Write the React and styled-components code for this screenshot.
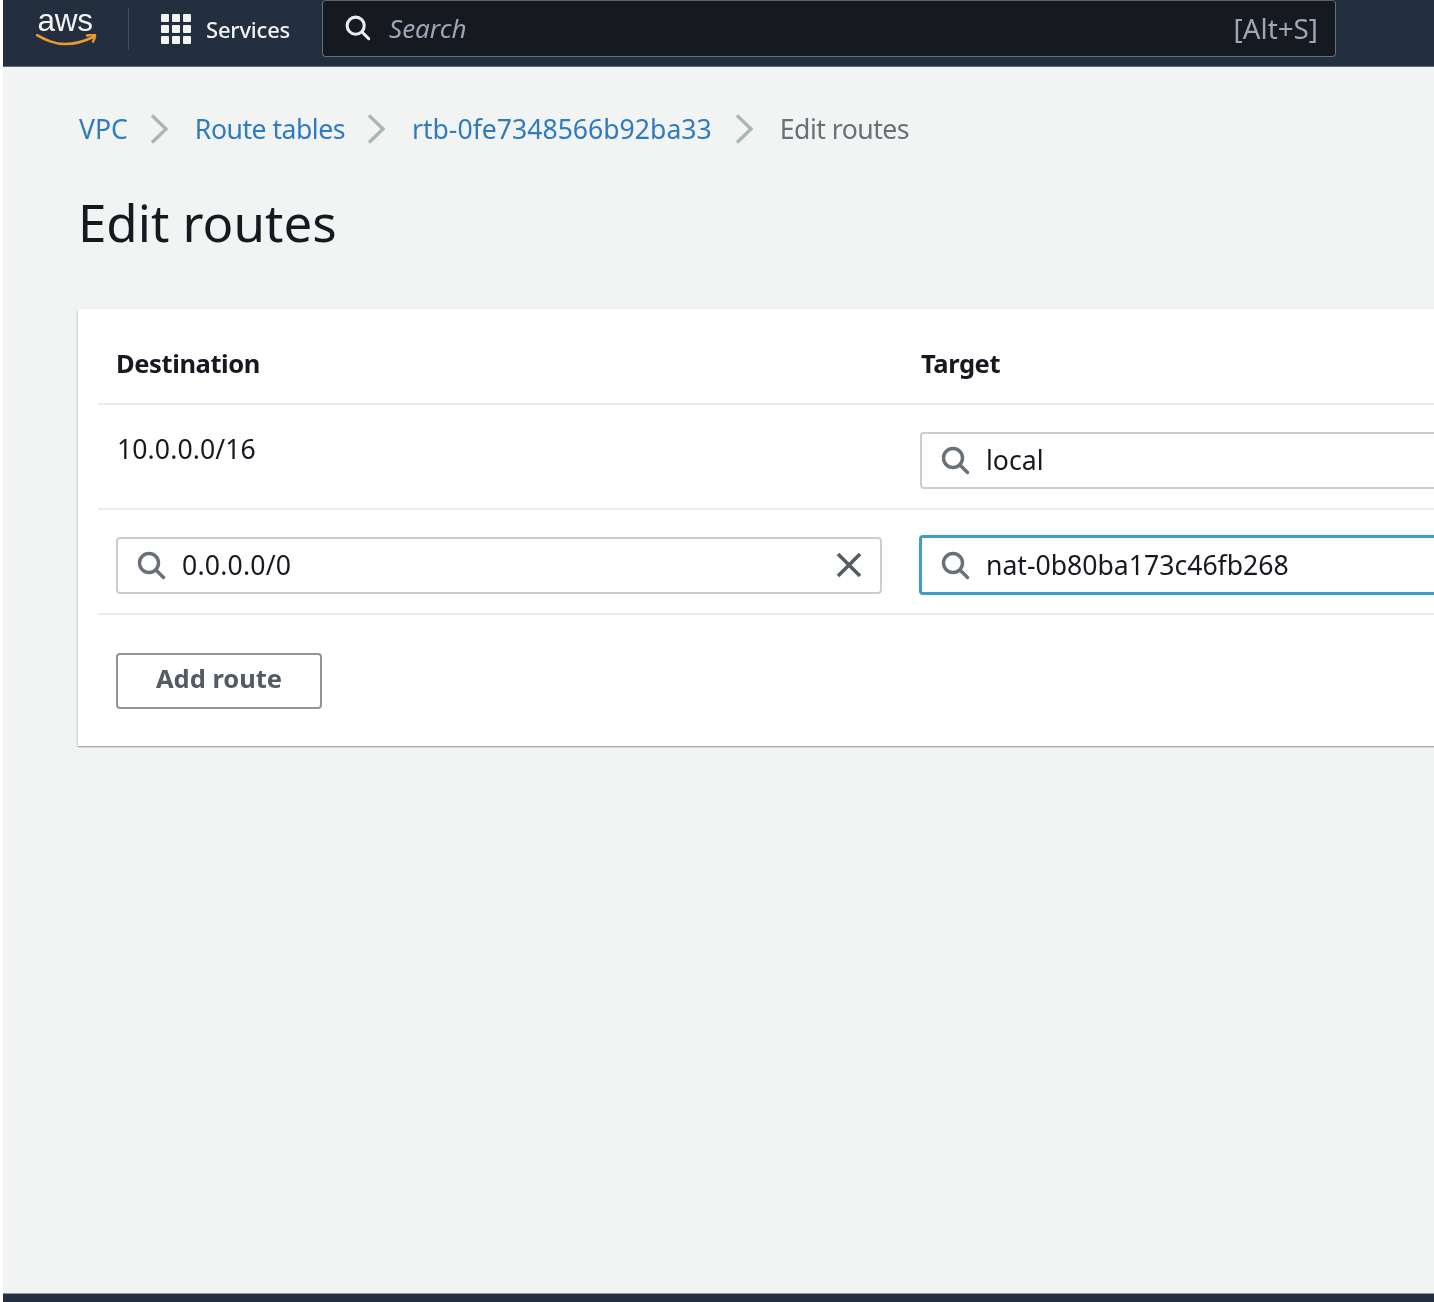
import React from "react";
import styled, { createGlobalStyle } from "styled-components";

const Global = createGlobalStyle`
  html, body { margin: 0; padding: 0; background: #fff; }
  body { font-family: "Noto Sans", "Open Sans", sans-serif; overflow: hidden; }
`;

const Page = styled.div`
  width: 1434px;
  height: 1302px;
  box-sizing: border-box;
  padding-left: 3px;
  display: flex;
  flex-direction: column;
  overflow: hidden;
  filter: blur(0.45px);
`;

const TopBar = styled.header`
  flex: 0 0 67px;
  box-sizing: border-box;
  height: 67px;
  background: #232f3e;
  border-bottom: 1px solid #5f6b7a;
  display: flex;
  align-items: flex-start;
  padding-left: 33px;
`;

const LogoSlot = styled.div`
  width: 62px;
  height: 50px;
  margin-top: 5px;
  display: flex;
  flex-direction: column;
`;

const WordMark = styled.span`
  display: block;
  height: 29px;
  line-height: 30px;
  margin-left: 1.5px;
  font-family: "Liberation Sans", sans-serif;
  font-size: 31.5px;
  letter-spacing: -0.2px;
  color: #f2f3f3;
`;

const NavDivider = styled.div`
  width: 1px;
  height: 42px;
  margin: 8px 0 0 30px;
  background: #414d5c;
`;

const ServicesButton = styled.div`
  display: flex;
  align-items: center;
  gap: 14px;
  margin: 13px 0 0 31px;
  height: 32px;
  width: 162px;
  color: #f2f3f3;
  font-size: 22px;
  font-weight: 500;
  letter-spacing: -0.2px;
`;

const SearchBox = styled.div`
  width: 1014px;
  height: 57px;
  box-sizing: border-box;
  background: #16191f;
  border: 1px solid #687078;
  border-top-color: #59646c;
  border-radius: 4px;
  display: flex;
  align-items: center;
  padding: 0 17px 2px 21px;
  color: #95a5a6;
  font-size: 26px;
`;

const SearchPlaceholder = styled.span`
  margin-left: 18px;
  flex: 1;
  font-style: italic;
  color: #9ba7b6;
`;

const Shortcut = styled.span`
  color: #9ba7b6;
  font-size: 27.8px;
`;

const Main = styled.main`
  flex: 1;
  background: #f2f3f3;
  padding-left: 75px;
  min-height: 0;
`;

const Breadcrumbs = styled.nav`
  display: flex;
  align-items: center;
  height: 40px;
  margin: 42px 0 0 1px;
  font-size: 26.6px;
  white-space: nowrap;
`;

const Crumb = styled.a`
  color: ${(p) => (p.$current ? "#687078" : "#2f7bc0")};
  letter-spacing: ${(p) => (p.$tight ? "-0.5px" : "0")};
`;

const CrumbSep = styled.svg`
  width: 24px;
  height: 32px;
  margin: 0 24px 0 ${(p) => p.$left || 19}px;
  flex: none;
`;

const Title = styled.h1`
  margin: 45px 0 0;
  height: 56px;
  line-height: 56px;
  font-size: 51px;
  font-weight: 400;
  color: #16191f;
`;

const Card = styled.section`
  margin-top: 59px;
  width: 1500px;
  height: 437px;
  box-sizing: border-box;
  background: #fff;
  padding-left: 20px;
  box-shadow: 0 1px 1px 0 rgba(0, 28, 36, 0.2), 1px 1px 2px 0 rgba(0, 28, 36, 0.12),
    -1px 1px 2px 0 rgba(0, 28, 36, 0.12);
`;

const Row = styled.div`
  display: grid;
  grid-template-columns: 766px 766px;
  column-gap: 38px;
  box-sizing: border-box;
  height: ${(p) => p.$h}px;
  padding: ${(p) => p.$pt}px 0 0 18px;
  border-bottom: 2px solid #eaeded;
`;

const HeaderCell = styled.div`
  font-size: 25.5px;
  font-weight: 700;
  color: #16191f;
  line-height: 40px;
  letter-spacing: -0.4px;
  margin-top: -1px;
  padding-left: ${(p) => p.$inset || 0}px;
`;

const ValueCell = styled.div`
  font-size: 26.6px;
  line-height: 40px;
  color: #16191f;
  margin-top: -3px;
  padding-left: 1px;
  letter-spacing: 0.1px;
`;

const SearchField = styled.div`
  height: ${(p) => (p.$focus ? 60 : 57)}px;
  margin: ${(p) => (p.$focus ? "-2px 0 0 -1px" : "0")};
  box-sizing: border-box;
  display: flex;
  align-items: center;
  background: #fff;
  border: ${(p) => (p.$focus ? "3px solid #3d9fc5" : "2px solid #c9ced1")};
  border-radius: 4px;
  padding: 0 17px ${(p) => (p.$focus ? 0 : 2)}px 18px;
  font-size: 26.6px;
  color: #16191f;
`;

const FieldText = styled.span`
  margin-left: 16px;
  flex: 1;
  letter-spacing: ${(p) => p.$spacing || 0}px;
`;

const FooterActions = styled.div`
  padding: 38px 0 0 18px;
`;

const AddButton = styled.button`
  width: 206px;
  height: 56px;
  box-sizing: border-box;
  background: #fff;
  border: 2px solid #8d949c;
  border-radius: 4px;
  font-family: inherit;
  font-size: 25.5px;
  font-weight: 700;
  color: #545b64;
  padding: 0 0 6px;
`;

const BottomBar = styled.footer`
  flex: 0 0 9px;
  box-sizing: border-box;
  background: #232f3e;
  border-top: 1px solid #8d949c;
`;

const AwsSmile = () => (
  <svg width="62" height="21" viewBox="0 29 62 21" fill="none" style={{ flex: "none" }}>
    <path d="M1 30c9 5 17 9 28 9 10 0 20-3 28-7" stroke="#ec9a2f" strokeWidth="2.6" fill="none" strokeLinecap="round" />
    <path d="M51 30.500c3-.8 6-.8 8-.4.3 1.500-.6 4-2 6.500" stroke="#ec9a2f" strokeWidth="2.4" fill="none" strokeLinecap="round" />
  </svg>
);

const GridIcon = () => (
  <svg width="32" height="32" viewBox="0 0 32 32" fill="#f2f3f3">
    {[1, 12, 23].flatMap((y) =>
      [1, 12, 23].map((x) => <rect key={`${x}-${y}`} x={x} y={y} width="8" height="8" rx="1" />)
    )}
  </svg>
);

const SearchIcon = ({ color = "#687078", size = 30 }) => (
  <svg width={size} height={size} viewBox="0 0 30 30" fill="none" stroke={color} strokeWidth="3.400" style={{ flex: "none" }}>
    <circle cx="13" cy="13" r="9.500" />
    <path d="M20 20l7.500 7.500" strokeLinecap="round" />
  </svg>
);

const CloseIcon = () => (
  <svg width="28" height="28" viewBox="0 0 28 28" fill="none" stroke="#545b64" strokeWidth="3.600" style={{ flex: "none" }}>
    <path d="M3 3l22 22M25 3L3 25" />
  </svg>
);

const Chevron = (props) => (
  <CrumbSep viewBox="0 0 24 32" fill="none" stroke="#aab7b8" strokeWidth="3.400" {...props}>
    <path d="M5 2.500L19 16 5 29.500" />
  </CrumbSep>
);

export default function App() {
  return (
    <Page>
      <Global />
      <TopBar>
        <LogoSlot>
          <WordMark>aws</WordMark>
          <AwsSmile />
        </LogoSlot>
        <NavDivider />
        <ServicesButton>
          <GridIcon />
          Services
        </ServicesButton>
        <SearchBox>
          <SearchIcon color="#eaeded" size={27} />
          <SearchPlaceholder>Search</SearchPlaceholder>
          <Shortcut>[Alt+S]</Shortcut>
        </SearchBox>
      </TopBar>
      <Main>
        <Breadcrumbs>
          <Crumb>VPC</Crumb>
          <Chevron />
          <Crumb $tight>Route tables</Crumb>
          <Chevron />
          <Crumb>rtb-0fe7348566b92ba33</Crumb>
          <Chevron $left={20} />
          <Crumb $current $tight>Edit routes</Crumb>
        </Breadcrumbs>
        <Title>Edit routes</Title>
        <Card>
          <Row $h={96} $pt={35}>
            <HeaderCell>Destination</HeaderCell>
            <HeaderCell $inset={1}>Target</HeaderCell>
          </Row>
          <Row $h={105} $pt={27}>
            <ValueCell>10.0.0.0/16</ValueCell>
            <SearchField>
              <SearchIcon />
              <FieldText>local</FieldText>
            </SearchField>
          </Row>
          <Row $h={105} $pt={27}>
            <SearchField>
              <SearchIcon />
              <FieldText $spacing={0.2}>0.0.0.0/0</FieldText>
              <CloseIcon />
            </SearchField>
            <SearchField $focus>
              <SearchIcon />
              <FieldText>nat-0b80ba173c46fb268</FieldText>
            </SearchField>
          </Row>
          <FooterActions>
            <AddButton>Add route</AddButton>
          </FooterActions>
        </Card>
      </Main>
      <BottomBar />
    </Page>
  );
}
